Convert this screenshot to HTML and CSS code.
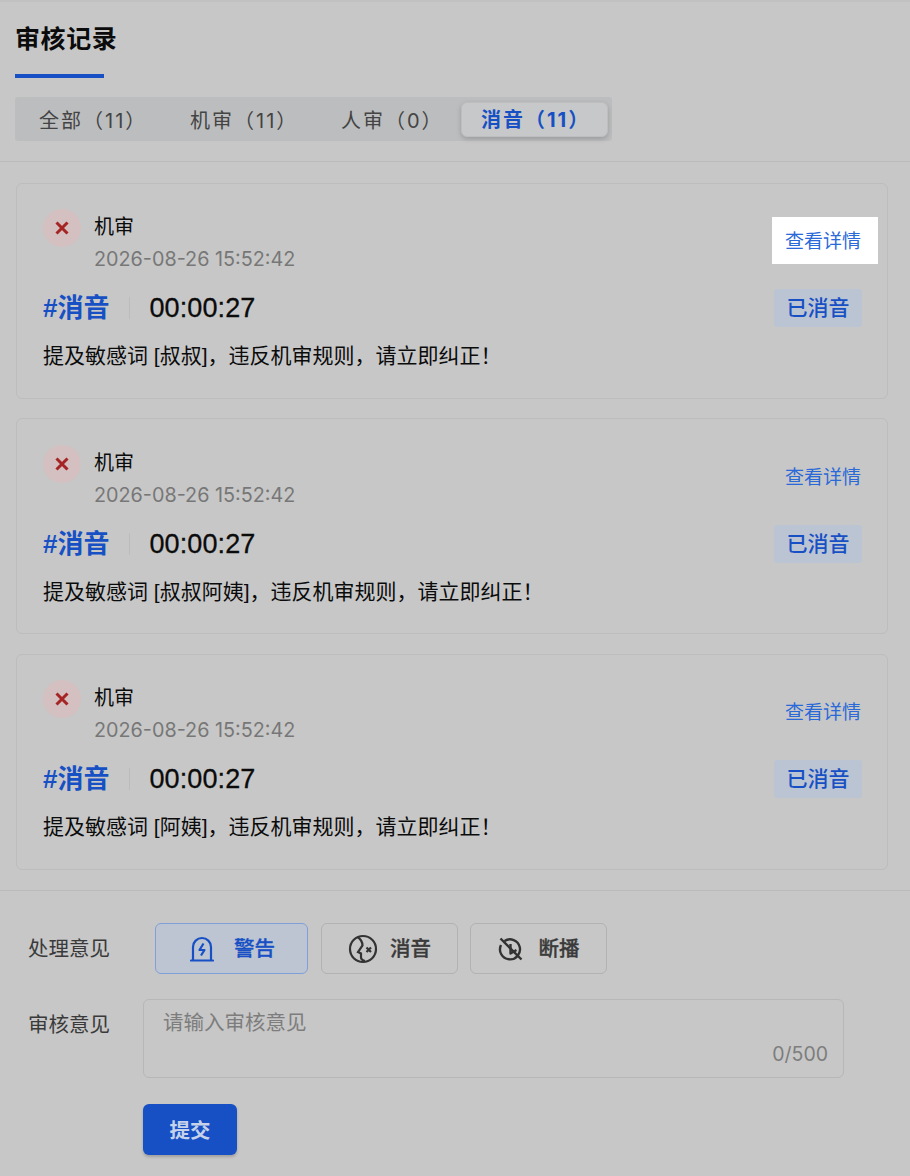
FILE: index.html
```html
<!DOCTYPE html>
<html lang="zh-CN">
<head>
<meta charset="utf-8">
<title>审核记录</title>
<link rel="stylesheet" href="styles.css">
</head>
<body>
<header class="head">
  <div class="title-wrap"><h1 class="title">审核记录</h1></div>
  <div class="tabs">
    <span class="tab">全部（11）</span>
    <span class="tab">机审（11）</span>
    <span class="tab tab-short">人审（0）</span>
    <span class="tab tab-active">消音（11）</span>
  </div>
</header>
<main class="list">
  <article class="card">
    <div class="card-top">
      <span class="status"><svg width="14" height="14" viewBox="0 0 14 14"><path d="M1.500 1.500l11 11M12.500 1.500l-11 11" stroke="#a52424" stroke-width="3" fill="none"/></svg></span>
      <div class="meta"><div class="who">机审</div><div class="date">2026-08-26 15:52:42</div></div>
      <a class="detail detail-hover">查看详情</a>
    </div>
    <div class="card-mid">
      <span class="tag">#消音</span><span class="sep"></span><span class="time">00:00:27</span>
      <span class="badge">已消音</span>
    </div>
    <p class="msg">提及敏感词 [叔叔]，违反机审规则，请立即纠正！</p>
  </article>
  <article class="card card-second">
    <div class="card-top">
      <span class="status"><svg width="14" height="14" viewBox="0 0 14 14"><path d="M1.500 1.500l11 11M12.500 1.500l-11 11" stroke="#a52424" stroke-width="3" fill="none"/></svg></span>
      <div class="meta"><div class="who">机审</div><div class="date">2026-08-26 15:52:42</div></div>
      <a class="detail">查看详情</a>
    </div>
    <div class="card-mid">
      <span class="tag">#消音</span><span class="sep"></span><span class="time">00:00:27</span>
      <span class="badge">已消音</span>
    </div>
    <p class="msg">提及敏感词 [叔叔阿姨]，违反机审规则，请立即纠正！</p>
  </article>
  <article class="card card-last">
    <div class="card-top">
      <span class="status"><svg width="14" height="14" viewBox="0 0 14 14"><path d="M1.500 1.500l11 11M12.500 1.500l-11 11" stroke="#a52424" stroke-width="3" fill="none"/></svg></span>
      <div class="meta"><div class="who">机审</div><div class="date">2026-08-26 15:52:42</div></div>
      <a class="detail">查看详情</a>
    </div>
    <div class="card-mid">
      <span class="tag">#消音</span><span class="sep"></span><span class="time">00:00:27</span>
      <span class="badge">已消音</span>
    </div>
    <p class="msg">提及敏感词 [阿姨]，违反机审规则，请立即纠正！</p>
  </article>
</main>
<section class="form">
  <div class="row-actions">
    <span class="label">处理意见</span>
    <button class="act act-warn">
      <svg width="24" height="26" viewBox="0 0 24 26" fill="none" stroke="#1650c4" stroke-width="2.200"><path d="M3 24.500V11a9 9 0 0 1 18 0v13.500"/><path d="M1 24.500h22" stroke-linecap="round"/><path d="M13.500 7.500L9.500 14h5L11 19.500" stroke-width="2.200" stroke-linejoin="round"/></svg>
      <span>警告</span>
    </button>
    <button class="act act-mute">
      <svg width="30" height="30" viewBox="0 0 30 30" fill="none" stroke="#333" stroke-width="2.200"><circle cx="15" cy="15" r="13"/><path d="M9.500 3c3 2 5 5 5 8.500L10 18l3 1.500v4c0 2 2 3 4 3.500"/><path d="M18.500 13.500l4.500 4.500M23 13.500l-4.500 4.500"/></svg>
      <span>消音</span>
    </button>
    <button class="act act-cut">
      <svg width="26" height="26" viewBox="0 0 26 26" fill="none" stroke="#333" stroke-width="2.400"><path d="M6.500 5a10 10 0 1 1-3.500 4"/><path d="M2.500 2.500L23.500 23.500"/><path d="M12.500 8v9.500l6-3.500" stroke-linejoin="round"/></svg>
      <span>断播</span>
    </button>
  </div>
  <div class="row-opinion">
    <span class="label">审核意见</span>
    <div class="box">
      <div class="placeholder">请输入审核意见</div>
      <div class="count">0/500</div>
    </div>
  </div>
  <button class="submit">提交</button>
</section>
</body>
</html>
```
FILE: styles.css
```css
* { box-sizing: border-box; }
html, body { margin: 0; padding: 0; }
body {
  width: 910px;
  height: 1176px;
  overflow: hidden;
  background: #c7c7c7;
  color: #0b0b0b;
  font-family: "Liberation Sans", "Noto Sans CJK SC", sans-serif;
}
.head {
  height: 162px;
  padding: 0 0 0 15px;
  border-top: 2px solid #c1c1c1;
  border-bottom: 1px solid #bababa;
}
.title-wrap {
  width: 89px;
  height: 76px;
  border-bottom: 4px solid #1650c4;
}
.title {
  margin: 0;
  padding-top: 19px;
  width: 110px;
  font-size: 25px;
  letter-spacing: .6px;
  line-height: 36px;
  font-weight: 700;
  white-space: nowrap;
}
.tabs {
  display: flex;
  align-items: center;
  width: 597px;
  height: 44px;
  margin-top: 19px;
  padding-left: 4px;
  background: #bcbdbe;
  border-radius: 3px;
}
.tab {
  width: 151px;
  padding-left: 20px;
  font-family: Inter, "Noto Sans CJK SC", sans-serif;
  font-size: 20px;
  letter-spacing: 2px;
  color: #444;
  white-space: nowrap;
}
.tab-short { width: 138px; }
.tab-active {
  width: 147px;
  height: 35px;
  margin-left: 2px;
  padding-left: 19px;
  line-height: 34px;
  border-radius: 6px;
  background: #c7c8c9;
  color: #1650c4;
  font-weight: 700;
  border: 1px solid #bebebe;
  box-shadow: 0 2px 5px rgba(0, 0, 0, .18);
}
.list {
  display: flex;
  flex-direction: column;
  gap: 19px;
  padding: 21px 22px 20px 16px;
  border-bottom: 1px solid #bababa;
}
.card {
  height: 216px;
  padding: 23px 26px 0 26px;
  border: 1px solid #bdbdbd;
  border-radius: 6px;
}
.card-second { padding-top: 24px; }
.card-last { margin-top: 1px; }
.card-top {
  display: flex;
  align-items: flex-start;
  height: 66px;
}
.status {
  display: flex;
  align-items: center;
  justify-content: center;
  width: 38px;
  height: 38px;
  border-radius: 50%;
  background: #d4c0c1;
  margin-top: 2px;
}
.meta { margin-left: 13px; }
.who { font-size: 20px; line-height: 32px; margin-top: 4px; }
.date {
  font-family: Inter, "Noto Sans CJK SC", sans-serif;
  font-size: 19.800px;
  line-height: 32px;
  color: #777;
}
.detail {
  margin-left: auto;
  margin-top: 21px;
  color: #2a69d8;
  font-size: 19px;
  line-height: 28px;
  white-space: nowrap;
}
.detail-hover {
  background: #fff;
  padding: 11px 17px 8px 13px;
  margin: 10px -17px 0 auto;
}
.card-mid {
  display: flex;
  align-items: center;
  height: 38px;
  margin-top: 16px;
}
.tag {
  color: #1650c4;
  font-size: 26px;
  font-weight: 700;
  line-height: 38px;
  white-space: nowrap;
}
.sep {
  width: 1px;
  height: 22px;
  background: #bcbcbc;
  margin: 0 19px 0 20px;
}
.time {
  font-size: 27px;
  font-weight: 500;
  letter-spacing: .1px;
  -webkit-text-stroke: .3px #0b0b0b;
  line-height: 38px;
  white-space: nowrap;
}
.badge {
  margin-left: auto;
  margin-right: -1px;
  width: 88px;
  height: 38px;
  border-radius: 3px;
  background: #bbc4d3;
  color: #1650c4;
  font-size: 21px;
  font-weight: 500;
  line-height: 38px;
  text-align: center;
}
.msg {
  margin: 14px 0 0;
  font-size: 21px;
  line-height: 30px;
  white-space: nowrap;
}
.form { padding: 32px 0 0 28px; }
.row-actions {
  display: flex;
  align-items: center;
  height: 51px;
}
.label {
  width: 115px;
  flex: none;
  color: #3a3a3a;
  font-size: 20.500px;
  line-height: 30px;
  white-space: nowrap;
}
.act {
  display: flex;
  align-items: center;
  justify-content: center;
  height: 51px;
  padding: 0 0 3px;
  margin: 0 12px 0 0;
  background: transparent;
  border: 1px solid #b2b2b2;
  border-radius: 6px;
  color: #3a3a3a;
  font-family: inherit;
  font-size: 20.500px;
  font-weight: 500;
  -webkit-text-stroke: .3px currentColor;
}
.act svg { margin-top: 3px; }
.act-warn {
  width: 153px;
  gap: 20px;
  margin-left: 12px;
  margin-right: 13px;
  padding-left: 2px;
  background: #bec5d2;
  border-color: #7f9fd8;
  color: #1650c4;
}
.act-mute { width: 137px; gap: 12px; }
.act-cut { width: 137px; gap: 15px; }
.row-opinion {
  display: flex;
  align-items: flex-start;
  margin-top: 25px;
}
.row-opinion .label { margin-top: 11px; }
.box {
  width: 701px;
  height: 79px;
  padding: 8px 15px 0 19px;
  border: 1px solid #b7b7b7;
  border-radius: 6px;
}
.placeholder { color: #7d7d7d; font-size: 20.500px; line-height: 30px; }
.count {
  margin-top: 3px;
  color: #7d7d7d;
  font-family: Inter, sans-serif;
  font-size: 19.500px;
  line-height: 26px;
  text-align: right;
}
.submit {
  display: block;
  width: 94px;
  height: 51px;
  margin: 26px 0 0 115px;
  padding: 0 0 2px;
  border: 0;
  border-radius: 6px;
  background: #1650c4;
  color: #c6d2ea;
  font-family: inherit;
  font-size: 20.500px;
  font-weight: 700;
  box-shadow: 0 2px 3px rgba(0, 0, 0, .2);
}
```
